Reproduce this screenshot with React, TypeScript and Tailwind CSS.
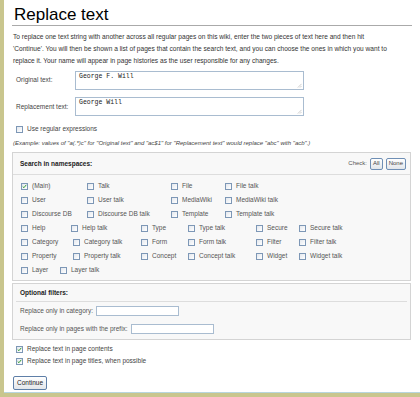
import React from "react";

const font = { fontFamily: '"Liberation Sans", Arial, sans-serif' };

function Box({ checked = false }: { checked?: boolean }) {
  return (
    <span className="relative inline-block h-[7px] w-[7px] shrink-0 border border-[#7d97b6] bg-gradient-to-br from-[#e4e8ee] to-white">
      {checked && (
        <svg viewBox="0 0 7 7" className="absolute left-0 top-0 h-[5px] w-[5px]">
          <path d="M1 3.5 L2.7 5.2 L6 1.2" stroke="#2f9a2f" strokeWidth="1.4" fill="none" />
        </svg>
      )}
    </span>
  );
}

type Item = [string, string];

const nsRows: Item[][] = [
  [["(Main)", "w-[66px]"], ["Talk", "w-[84px]"], ["File", "w-[54px]"], ["File talk", ""]],
  [["User", "w-[66px]"], ["User talk", "w-[84px]"], ["MediaWiki", "w-[54px]"], ["MediaWiki talk", ""]],
  [["Discourse DB", "w-[66px]"], ["Discourse DB talk", "w-[84px]"], ["Template", "w-[54px]"], ["Template talk", ""]],
  [["Help", "w-[50px]"], ["Help talk", "w-[70px]"], ["Type", "w-[47px]"], ["Type talk", "w-[68px]"], ["Secure", "w-[43px]"], ["Secure talk", ""]],
  [["Category", "w-[52px]"], ["Category talk", "w-[68px]"], ["Form", "w-[47px]"], ["Form talk", "w-[68px]"], ["Filter", "w-[43px]"], ["Filter talk", ""]],
  [["Property", "w-[52px]"], ["Property talk", "w-[68px]"], ["Concept", "w-[47px]"], ["Concept talk", "w-[68px]"], ["Widget", "w-[43px]"], ["Widget talk", ""]],
  [["Layer", "w-[39px]"], ["Layer talk", ""]],
];

function TextArea({ value }: { value: string }) {
  return (
    <div className="relative h-[19px] w-[229px] border border-[#a9bcd0] bg-white px-[3px] pt-[1px] font-['Liberation_Mono',monospace] text-[6.5px] leading-[8px] text-[#222]">
      {value}
      <svg viewBox="0 0 6 6" className="absolute bottom-[1px] right-[1px] h-[5px] w-[5px]">
        <path d="M5.5 1 L1 5.5 M5.5 3.5 L3.5 5.5" stroke="#aaa" strokeWidth="0.7" />
      </svg>
    </div>
  );
}

function Btn({ children }: { children: React.ReactNode }) {
  return (
    <span className="inline-flex h-[12px] items-center rounded-[2px] border border-[#6f8fb5] bg-gradient-to-b from-white to-[#e2e6ea] px-[2px] text-[6px] text-[#444]">
      {children}
    </span>
  );
}

export default function App() {
  return (
    <div style={font} className="flex h-[397px] w-[420px] flex-col overflow-hidden bg-[#c9c68e]">
      <div className="ml-[4px] flex h-[392px] flex-col bg-white">
        <div className="flex h-[2px]">
          <div className="w-[46px] bg-white" />
          <div className="flex-1 bg-gradient-to-b from-[#cfcf98] to-[#cde3e6]" />
        </div>
        <div className="px-[8px]">
          <h1 className="mt-[6px] border-b border-[#aaa] pb-[1px] pl-[2px] text-[17px] leading-[18px] text-black">Replace text</h1>
          <p className="mt-[5px] pl-[1px] text-[6.6px] leading-[12px] text-[#333]">
            <span className="block whitespace-nowrap">To replace one text string with another across all regular pages on this wiki, enter the two pieces of text here and then hit</span>
            <span className="block whitespace-nowrap">'Continue'. You will then be shown a list of pages that contain the search text, and you can choose the ones in which you want to</span>
            <span className="block whitespace-nowrap">replace it. Your name will appear in page histories as the user responsible for any changes.</span>
          </p>
          <div className="mt-[4px] flex items-start pl-[4px] text-[6.5px] text-[#444]">
            <span className="mt-[4px] w-[59px]">Original text:</span>
            <TextArea value="George F. Will" />
          </div>
          <div className="mt-[7px] flex items-center pl-[4px] text-[6.5px] text-[#444]">
            <span className="w-[59px]">Replacement text:</span>
            <TextArea value="George Will" />
          </div>
          <div className="mt-[8px] flex items-center gap-[4px] pl-[4px] text-[6.5px] text-[#444]">
            <Box />
            <span>Use regular expressions</span>
          </div>
          <div className="mt-[5px] whitespace-nowrap pl-[1px] text-[6px] italic text-[#444]">
            (Example: values of "a(.*)c" for "Original text" and "ac$1" for "Replacement text" would replace "abc" with "acb".)
          </div>

          <div className="mt-[4px] w-[399px] border border-[#d4d4d4] bg-[#f8f8f8] text-[6.5px] text-[#555]">
            <div className="flex h-[22px] items-center justify-between border-b border-[#ddd] pl-[7px] pr-[4px]">
              <span className="font-bold text-[#222]">Search in namespaces:</span>
              <span className="flex items-center gap-[3px] text-[6px]">
                <span>Check:</span>
                <Btn>All</Btn>
                <Btn>None</Btn>
              </span>
            </div>
            <div className="pb-[3px] pl-[8px] pt-[4px]">
              {nsRows.map((row, i) => (
                <div key={i} className="flex h-[14px] items-center">
                  {row.map(([label, w]) => (
                    <span key={label} className={`flex items-center gap-[4px] whitespace-nowrap ${w}`}>
                      <Box checked={label === "(Main)"} />
                      <span>{label}</span>
                    </span>
                  ))}
                </div>
              ))}
            </div>
          </div>

          <div className="mt-[2px] w-[399px] border border-[#d4d4d4] bg-[#f8f8f8] pb-[2px] text-[6.5px] text-[#555]">
            <div className="mx-[3px] flex h-[18px] items-center border-b border-[#ddd] pl-[4px]">
              <span className="font-bold text-[#222]">Optional filters:</span>
            </div>
            <div className="flex h-[18px] items-center pl-[7px]">
              <span>Replace only in category:</span>
              <span className="ml-[3px] h-[10px] w-[83px] border border-[#a9bcd0] bg-white" />
            </div>
            <div className="flex h-[17px] items-center pl-[7px]">
              <span>Replace only in pages with the prefix:</span>
              <span className="ml-[3px] h-[10px] w-[83px] border border-[#a9bcd0] bg-white" />
            </div>
          </div>

          <div className="mt-[3px] flex h-[12px] items-center gap-[4px] pl-[4px] text-[6.5px] text-[#444]">
            <Box checked />
            <span>Replace text in page contents</span>
          </div>
          <div className="flex h-[12px] items-center gap-[4px] pl-[4px] text-[6.5px] text-[#444]">
            <Box checked />
            <span>Replace text in page titles, when possible</span>
          </div>
          <div className="mt-[1px] pl-[1px]">
            <span className="inline-flex h-[14px] items-center rounded-[2px] border border-[#5e7fa8] bg-gradient-to-b from-white to-[#e3e6ea] px-[3px] text-[6.5px] text-[#222]">
              Continue
            </span>
          </div>
        </div>
      </div>
      <div className="ml-[4px] h-[1px] bg-[#b8d6de]" />
    </div>
  );
}
